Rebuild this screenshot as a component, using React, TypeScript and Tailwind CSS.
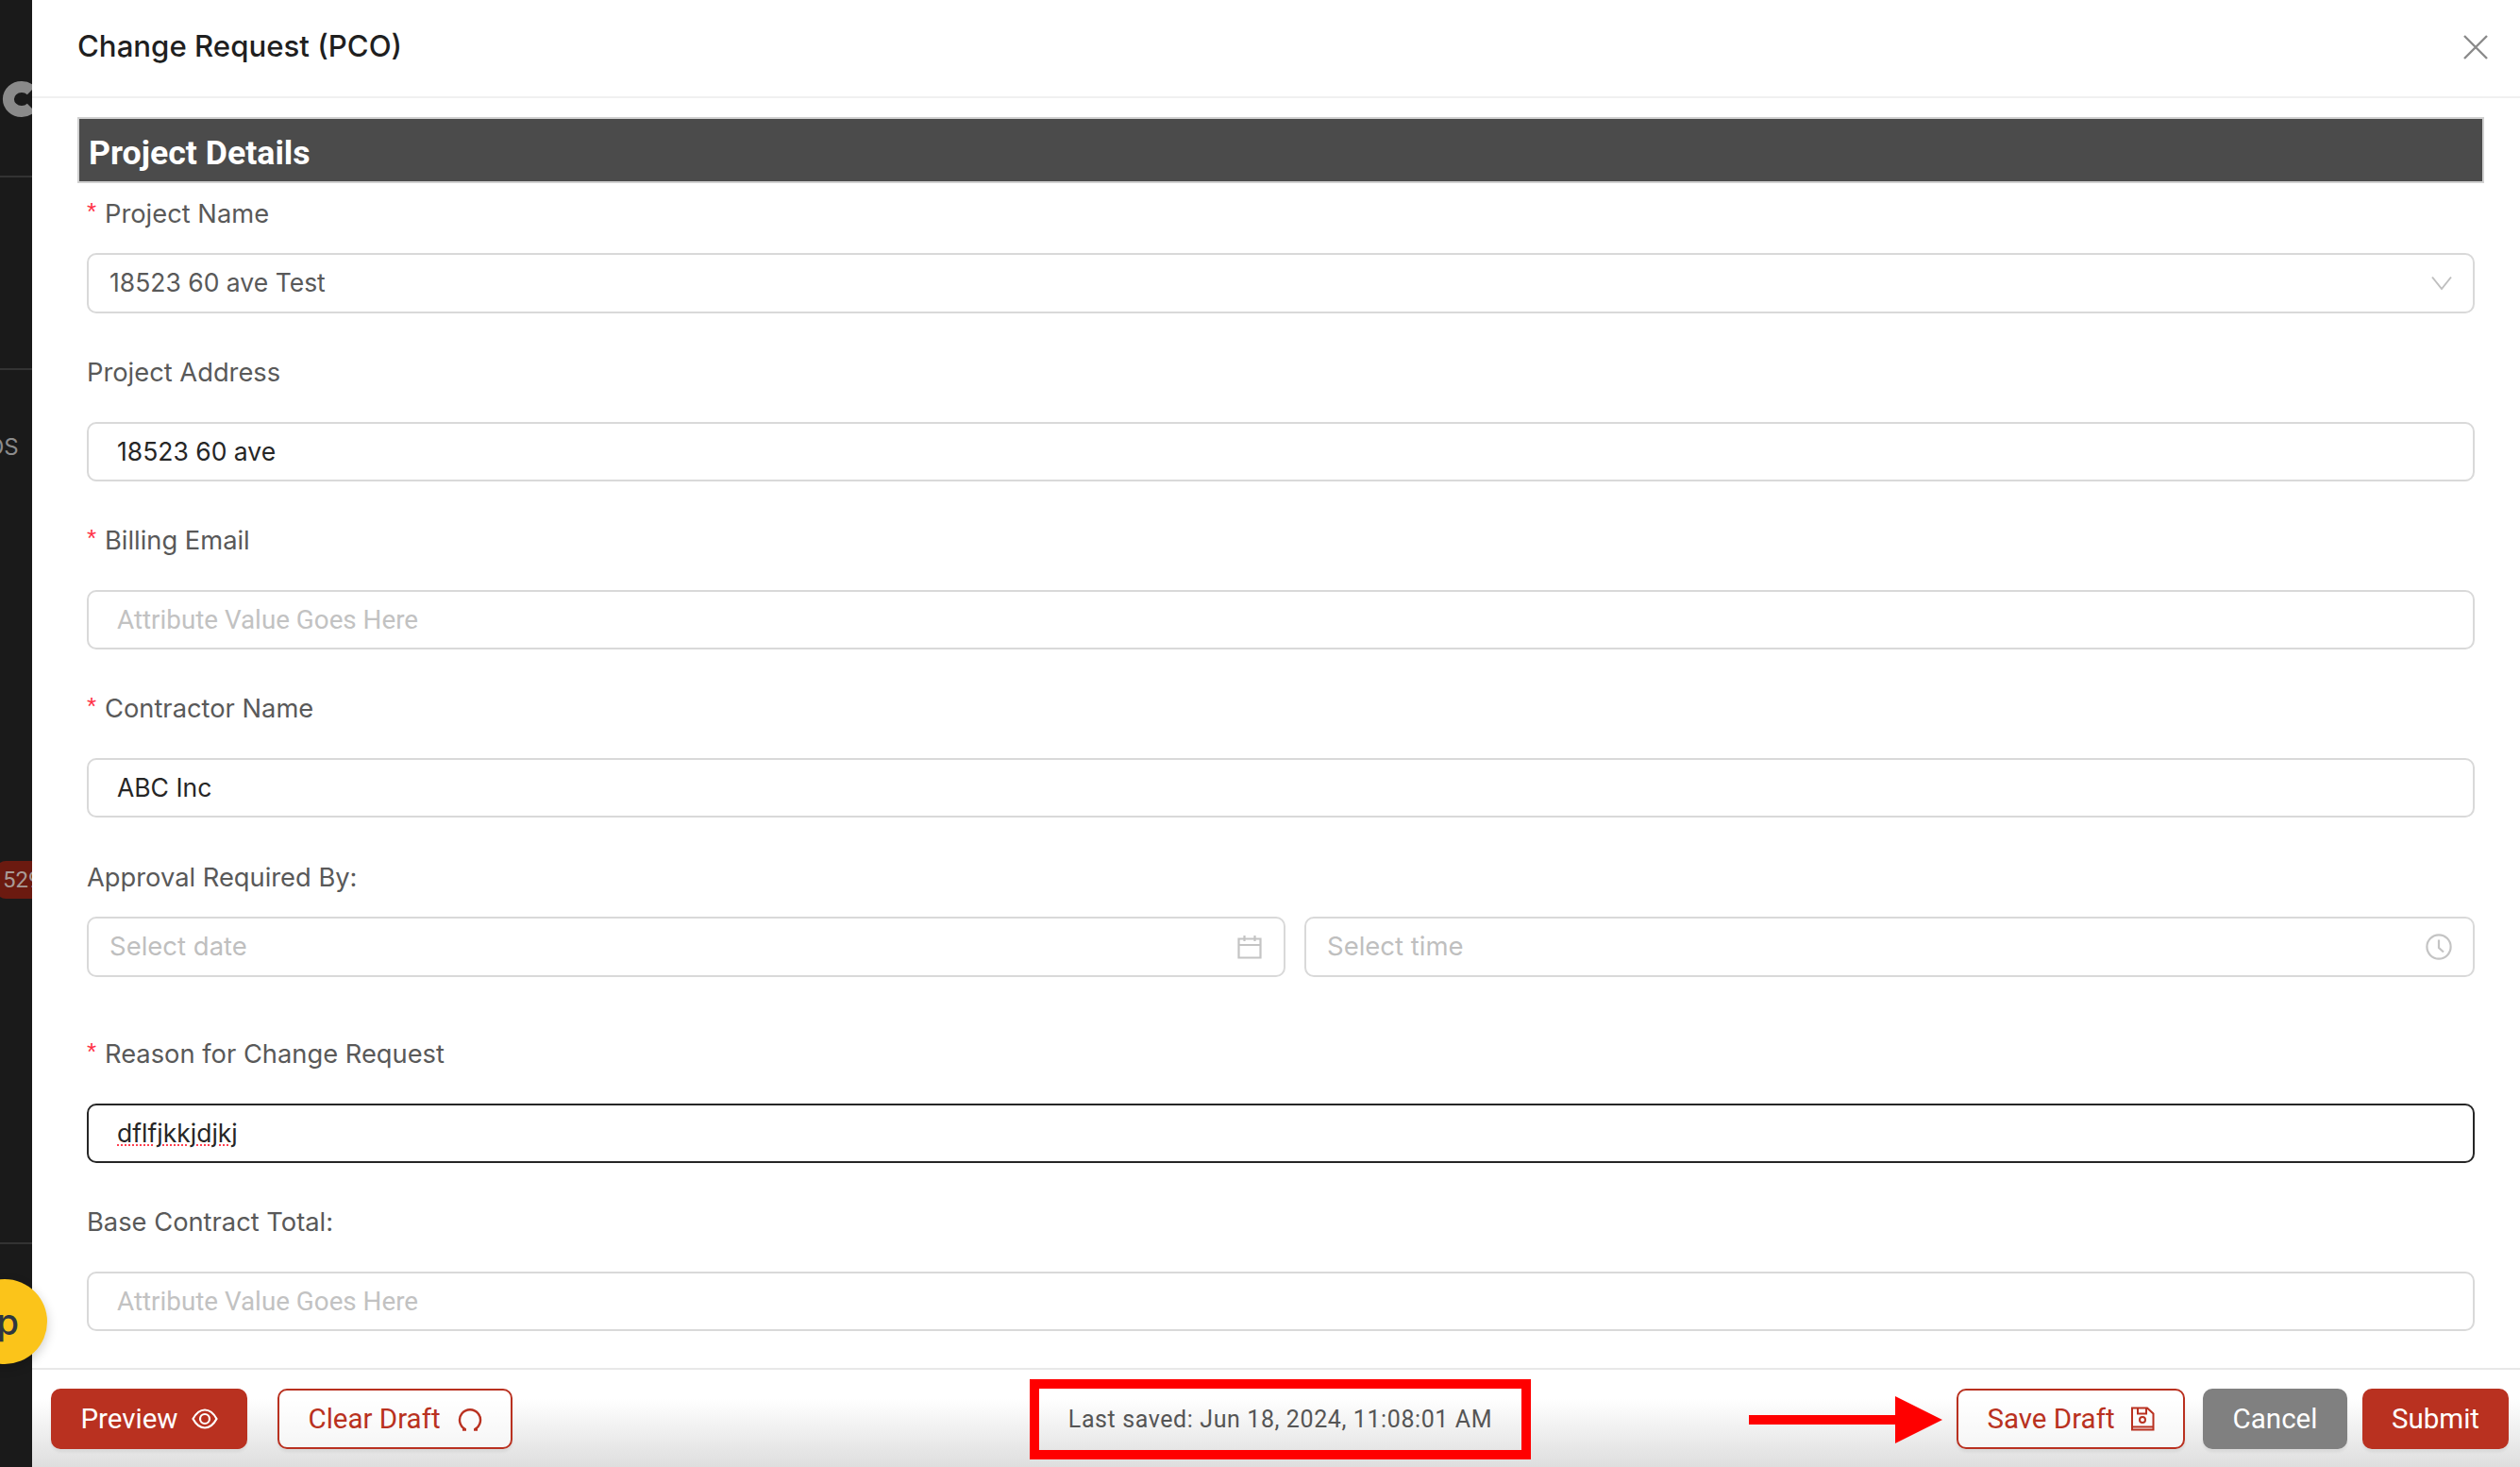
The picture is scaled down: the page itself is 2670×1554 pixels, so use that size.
import React from 'react';

/* inline icons, stroked to match the reference */
const CloseIcon = () => (
  <svg width="26" height="26" viewBox="0 0 26 26" fill="none" stroke="#8a8a8a" strokeWidth="2.4">
    <path d="M1 1 L25 25 M25 1 L1 25" />
  </svg>
);

const ChevronIcon = () => (
  <svg width="22" height="16" viewBox="0 0 22 16" fill="none" stroke="#bfbfbf" strokeWidth="2">
    <path d="M1 1.5 L11 14 L21 1.5" />
  </svg>
);

const CalendarIcon = () => (
  <svg width="26" height="26" viewBox="0 0 26 26" fill="none" stroke="#c4c4c4" strokeWidth="2.2">
    <path d="M1.5 4.5 H24.5 V24.5 H1.5 Z M1.5 11 H24.5 M7.5 1 V7 M18.5 1 V7" />
  </svg>
);

const ClockIcon = () => (
  <svg width="28" height="28" viewBox="0 0 28 28" fill="none" stroke="#c4c4c4" strokeWidth="2.2">
    <circle cx="14" cy="14" r="12.6" />
    <path d="M14 6.5 V15 L19 19.5" />
  </svg>
);

const EyeIcon = () => (
  <svg width="28" height="22" viewBox="0 0 28 22" fill="none" stroke="#ffffff" strokeWidth="2.2">
    <path d="M1.5 11 C5 4.5 9 1.5 14 1.5 C19 1.5 23 4.5 26.5 11 C23 17.5 19 20.5 14 20.5 C9 20.5 5 17.5 1.5 11 Z" />
    <circle cx="14" cy="11" r="5" />
  </svg>
);

const RedoIcon = () => (
  <svg width="26" height="26" viewBox="0 0 26 26" fill="none" stroke="#b93120" strokeWidth="2.4">
    <path d="M8 24 A11 11 0 1 1 18 24 M5 24.5 H9 M17 24.5 H21" />
  </svg>
);

const SaveIcon = () => (
  <svg width="26" height="26" viewBox="0 0 26 26" fill="none" stroke="#b93120" strokeWidth="2">
    <path d="M2 1.5 H18 L24.5 7.5 V24.5 H2 Z M8 1.5 V7.5 H17 V1.5 M2 21.5 H24.5" />
    <circle cx="13" cy="14" r="3" />
  </svg>
);

const LogoMark = () => (
  <svg className="ml-[1px] mt-[86px] shrink-0" width="33" height="38" viewBox="0 0 33 38" fill="none" stroke="#8a8a8a" strokeWidth="12">
    <path d="M32 10 A14 13 0 1 0 32 28" />
  </svg>
);

function Label({ text, required }: { text: string; required?: boolean }) {
  return (
    <div className="flex h-[32px] items-center pt-[2px] text-[27.3px] leading-[32px] text-[#595959]">
      {required && <span className="mr-[9px] mt-[-6px] w-[10px] font-['Liberation_Sans'] text-[26px] text-[#ff3045]">*</span>}
      <span>{text}</span>
    </div>
  );
}

function Box({ children, className = '' }: { children: React.ReactNode; className?: string }) {
  return (
    <div className={`flex h-[63px] items-center rounded-[10px] border-2 bg-white ${className}`}>
      {children}
    </div>
  );
}

export default function App() {
  return (
    <div className="relative flex h-[1554px] w-[2670px] overflow-hidden bg-black font-['Inter',sans-serif]">
      {/* dark app sidebar behind the modal */}
      <aside className="flex w-[34px] shrink-0 flex-col overflow-hidden bg-[#1a1a1a]">
        <LogoMark />
        <div className="mt-[62px] h-[2px] bg-[#333333]" />
        <div className="mt-[202px] h-[2px] bg-[#333333]" />
        <div className="ml-[-14px] mt-[67px] text-[24px] leading-[30px] text-[#8c8c8c]">OS</div>
        <div className="ml-[-4px] mt-[423px] flex h-[40px] w-[60px] items-center rounded-[10px] bg-[#6b1a10] pl-[7px] font-['Roboto'] text-[24px] text-[#a89a96]">529</div>
        <div className="mt-[364px] h-[2px] bg-[#333333]" />
      </aside>

      {/* modal */}
      <main className="flex min-w-0 flex-1 flex-col bg-white">
        <header className="flex h-[104px] shrink-0 items-center justify-between border-b-2 border-[#f0f0f0] pl-[48px] pr-[34px]">
          <h1 className="mt-[-4px] text-[31.2px] font-medium text-[#1f1f1f]">Change Request (PCO)</h1>
          <div className="mt-[-2px]"><CloseIcon /></div>
        </header>

        <div className="flex flex-1 flex-col pl-[48px] pr-[38px]">
          <h2 className="mt-[20px] flex h-[70px] items-center border-2 border-[#d0d0d0] bg-[#4b4b4b] pl-[10px] pt-[7px] font-['Roboto'] text-[35.7px] font-bold text-white">
            Project Details
          </h2>

          <div className="mr-[10px] flex flex-col pl-[10px]">
            <div className="mt-[16px]"><Label required text="Project Name" /></div>
            <Box className="mt-[26px] h-[64px] justify-between border-[#d9d9d9] pl-[22px] pr-[22px] text-[26.5px] text-[#595959]">
              <span>18523 60 ave Test</span>
              <ChevronIcon />
            </Box>

            <div className="mt-[46px]"><Label text="Project Address" /></div>
            <Box className="mt-[37px] border-[#d9d9d9] pl-[30px] text-[26.5px] text-[#262626]">18523 60 ave</Box>

            <div className="mt-[46px]"><Label required text="Billing Email" /></div>
            <Box className="mt-[37px] border-[#d9d9d9] pl-[30px] font-['Roboto'] text-[27.8px] text-[#c2c2c2]">Attribute Value Goes Here</Box>

            <div className="mt-[46px]"><Label required text="Contractor Name" /></div>
            <Box className="mt-[37px] border-[#d9d9d9] pl-[30px] text-[26.5px] text-[#262626]">ABC Inc</Box>

            <div className="mt-[47px]"><Label text="Approval Required By:" /></div>
            <div className="mt-[26px] flex gap-[20px]">
              <Box className="h-[64px] w-[1270px] justify-between border-[#d9d9d9] pl-[22px] pr-[23px] text-[27.5px] text-[#bfbfbf]">
                <span>Select date</span>
                <CalendarIcon />
              </Box>
              <Box className="h-[64px] flex-1 justify-between border-[#d9d9d9] pl-[22px] pr-[22px] text-[27.5px] text-[#bfbfbf]">
                <span>Select time</span>
                <ClockIcon />
              </Box>
            </div>

            <div className="mt-[65px]"><Label required text="Reason for Change Request" /></div>
            <Box className="mt-[37px] border-[#262626] pl-[30px] text-[26.5px] text-[#262626]">
              <span className="underline decoration-[#ff4050] decoration-dotted decoration-2 underline-offset-[3px]">dflfjkkjdjkj</span>
            </Box>

            <div className="mt-[46px]"><Label text="Base Contract Total:" /></div>
            <Box className="mt-[37px] border-[#d9d9d9] pl-[30px] font-['Roboto'] text-[27.8px] text-[#c2c2c2]">Attribute Value Goes Here</Box>
          </div>
        </div>

        <footer className="flex h-[105px] shrink-0 items-start border-t-2 border-[#e8e8e8] bg-gradient-to-b from-white from-30% to-[#dedede] pl-[20px] pr-[12px] pt-[20px] font-['Roboto'] text-[29.5px]">
          <button className="flex h-[64px] w-[208px] items-center justify-center gap-[14px] rounded-[10px] bg-[#b93120] text-white shadow-[0_3px_3px_rgba(0,0,0,0.06)]">
            Preview <EyeIcon />
          </button>
          <button className="ml-[32px] flex h-[64px] w-[249px] items-center justify-center gap-[18px] rounded-[10px] border-2 border-[#b93120] bg-white/60 text-[#b93120] shadow-[0_3px_3px_rgba(0,0,0,0.06)]">
            Clear Draft <RedoIcon />
          </button>

          <div className="ml-[548px] mt-[-10px] flex h-[85px] w-[531px] items-center justify-center border-[10px] border-[#ff0000] text-[25px] tracking-[0.6px] text-[#555555]">
            Last saved: Jun 18, 2024, 11:08:01 AM
          </div>

          <svg className="ml-[231px] mt-[8px]" width="205" height="50" viewBox="0 0 205 50" fill="#ff0000">
            <path d="M0 20 H155 V0 L205 25 L155 50 V30 H0 Z" />
          </svg>

          <button className="ml-[15px] flex h-[64px] w-[242px] items-center justify-center gap-[16px] rounded-[10px] border-2 border-[#b93120] bg-white/60 text-[#b93120] shadow-[0_3px_3px_rgba(0,0,0,0.06)]">
            Save Draft <SaveIcon />
          </button>
          <button className="ml-[19px] flex h-[64px] w-[153px] items-center justify-center rounded-[10px] bg-[#808080] text-white shadow-[0_3px_3px_rgba(0,0,0,0.06)]">
            Cancel
          </button>
          <button className="ml-[16px] flex h-[64px] w-[155px] items-center justify-center rounded-[10px] bg-[#b93120] text-white shadow-[0_3px_3px_rgba(0,0,0,0.06)]">
            Submit
          </button>
        </footer>
      </main>

      {/* floating help bubble, over the sidebar edge */}
      <div className="absolute left-[-40px] top-[1355px] flex h-[90px] w-[90px] items-center justify-end rounded-full bg-[#fbc41a] pr-[30px] text-[38px] font-medium text-[#2f3640] shadow-[0_4px_12px_rgba(0,0,0,0.2)]">
        p
      </div>
    </div>
  );
}
